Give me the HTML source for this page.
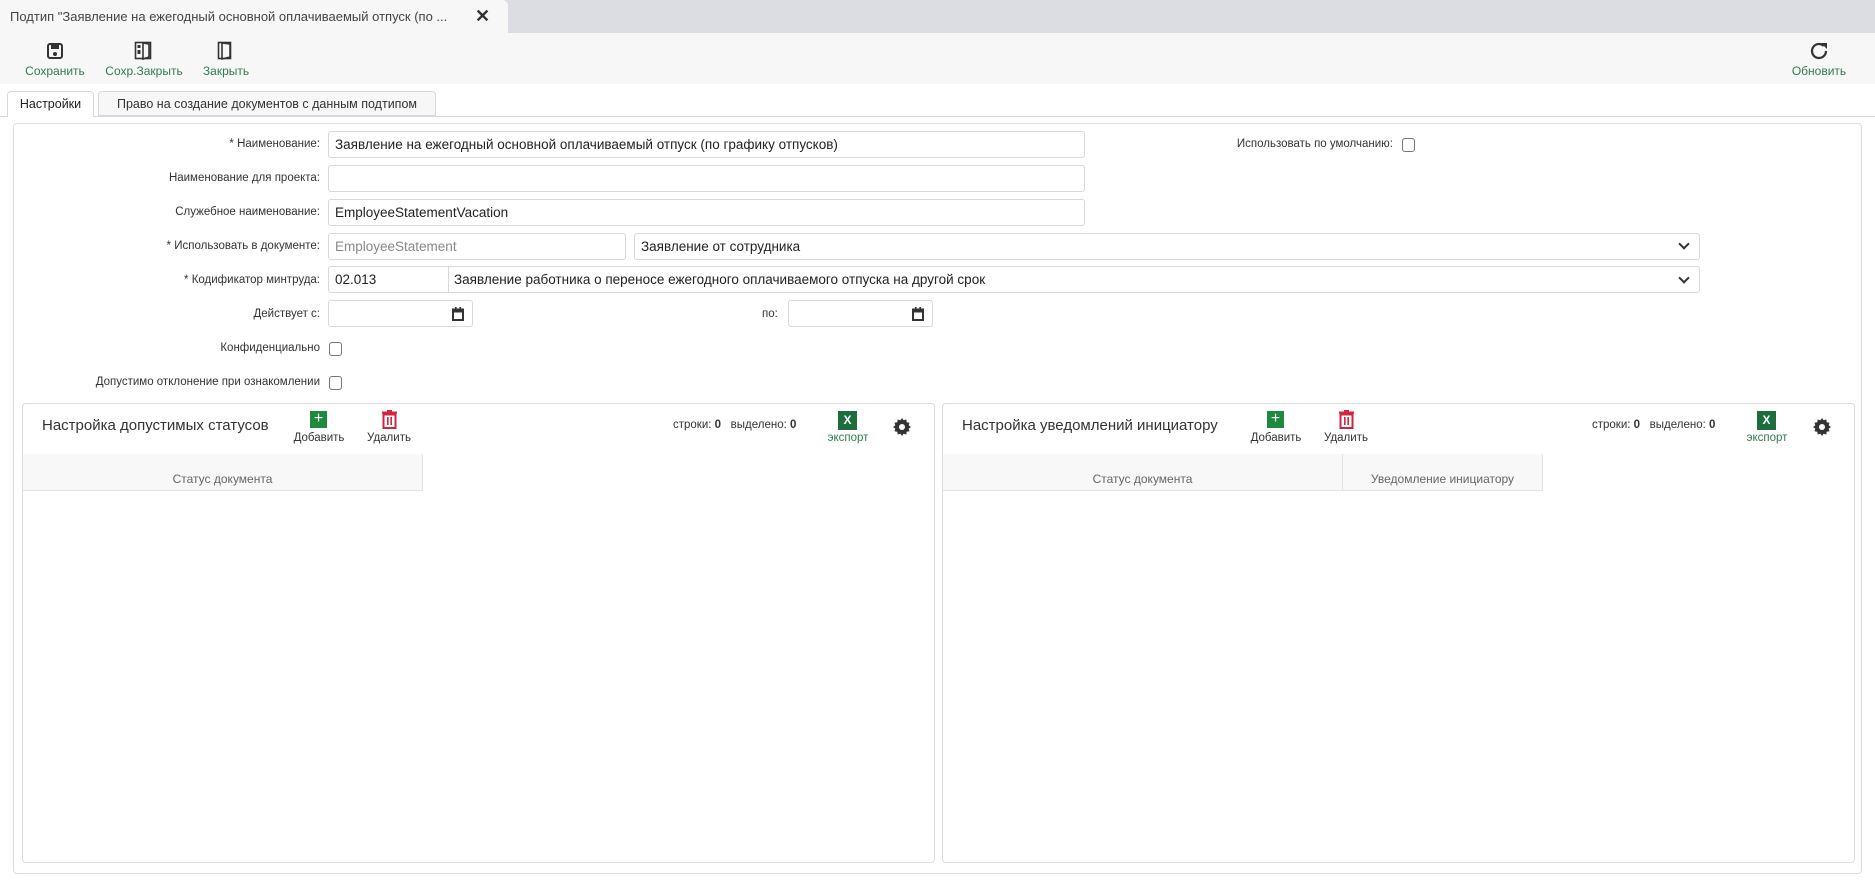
<!DOCTYPE html>
<html><head><meta charset="utf-8"><style>
*{box-sizing:border-box;margin:0;padding:0}
body{width:1875px;height:881px;background:#fff;font-family:"Liberation Sans",sans-serif;color:#333;position:relative;overflow:hidden}
.abs{position:absolute}
.tabbar{left:0;top:0;width:1875px;height:33px;background:#dcdde2}
.doctab{left:0;top:0;width:508px;height:33px;background:#f7f7f7;border-radius:0 6px 0 0;font-size:13px;line-height:33px;padding-left:10px;color:#444}
.toolbar{left:0;top:33px;width:1875px;height:51px;background:#f7f7f7}
.tb{font-size:12px;color:#2e7d4f;text-align:center}
.lbl{font-size:11.5px;color:#333;text-align:right;width:320px;left:0}
.inp{border:1px solid #d5d8de;border-radius:3px;height:27px;font-size:13.5px;line-height:25px;padding-left:6px;color:#222;background:#fff}
.cb{width:13px;height:14px;border:1px solid #777;border-radius:3px;background:#fff}
.panel{border:1px solid #dcdde2;border-radius:4px}
.gt{font-size:15px;color:#333}
.small{font-size:11.5px;color:#333;text-align:center}
.hdr{background:#f8f8f8;border-bottom:1px solid #e3e3e3;border-right:1px solid #e3e3e3;font-size:12px;color:#666;text-align:center;line-height:50px}
.arrow{width:8px;height:8px;border-right:2px solid #333;border-bottom:2px solid #333;transform:rotate(45deg)}
</style></head><body>
<div class="abs tabbar"></div>
<div class="abs doctab">Подтип "Заявление на ежегодный основной оплачиваемый отпуск (по ...<span style="position:absolute;left:475px;font-size:18px;font-weight:bold;color:#333">✕</span></div>
<div class="abs toolbar"></div>
<svg class="abs" style="left:46px;top:42px" width="18" height="18" viewBox="0 0 18 18"><rect x="2" y="2" width="14" height="14" rx="2" fill="none" stroke="#333" stroke-width="2"/><rect x="5" y="3" width="8" height="4" fill="#333"/><circle cx="9" cy="12" r="2" fill="#333"/></svg>
<div class="abs tb" style="left:20px;top:64px;width:70px">Сохранить</div>
<svg class="abs" style="left:134px;top:41px" width="18" height="20" viewBox="0 0 18 20"><rect x="1.5" y="1.5" width="15" height="16" fill="none" stroke="#333" stroke-width="1.6"/><path d="M9 2v16l6-2V3z" fill="none" stroke="#333" stroke-width="1.6"/><rect x="3.5" y="4" width="3" height="3" fill="#333"/><rect x="3.5" y="9" width="3" height="4" fill="#333"/></svg>
<div class="abs tb" style="left:102px;top:64px;width:84px">Сохр.Закрыть</div>
<svg class="abs" style="left:217px;top:41px" width="16" height="20" viewBox="0 0 16 20"><rect x="1.5" y="1.5" width="12" height="16" fill="none" stroke="#333" stroke-width="1.6"/><path d="M5 2v16l8-2V3z" fill="none" stroke="#333" stroke-width="1.6"/></svg>
<div class="abs tb" style="left:196px;top:64px;width:60px">Закрыть</div>
<svg class="abs" style="left:1808px;top:40px" width="22" height="22" viewBox="0 0 22 22"><path d="M18 11a7 7 0 1 1-2.2-5.1" fill="none" stroke="#333" stroke-width="2.2"/><path d="M13 3h6v6z" fill="#333"/></svg>
<div class="abs tb" style="left:1784px;top:64px;width:70px">Обновить</div>
<div class="abs" style="left:0;top:116px;width:1875px;height:1px;background:#d5d8de"></div>
<div class="abs" style="left:7px;top:91px;width:87px;height:26px;border:1px solid #d5d8de;border-bottom:none;border-radius:4px 4px 0 0;background:#fff;font-size:12.5px;line-height:25px;text-align:center;color:#222">Настройки</div>
<div class="abs" style="left:98px;top:91px;width:338px;height:25px;border:1px solid #d5d8de;border-radius:4px 4px 0 0;background:#f7f7f7;font-size:12.5px;line-height:24px;text-align:center;color:#333">Право на создание документов с данным подтипом</div>
<div class="abs panel" style="left:13px;top:123px;width:1849px;height:751px"></div>
<div class="abs lbl" style="top:138px">* Наименование:</div>
<div class="abs inp" style="left:328px;top:131px;width:757px">Заявление на ежегодный основной оплачиваемый отпуск (по графику отпусков)</div>
<div class="abs lbl" style="left:1073px;top:138px">Использовать по умолчанию:</div>
<div class="abs cb" style="left:1402px;top:138px"></div>
<div class="abs lbl" style="top:172px">Наименование для проекта:</div>
<div class="abs inp" style="left:328px;top:165px;width:757px"></div>
<div class="abs lbl" style="top:206px">Служебное наименование:</div>
<div class="abs inp" style="left:328px;top:199px;width:757px">EmployeeStatementVacation</div>
<div class="abs lbl" style="top:240px">* Использовать в документе:</div>
<div class="abs inp" style="left:328px;top:233px;width:298px;color:#888">EmployeeStatement</div>
<div class="abs inp" style="left:634px;top:233px;width:1066px">Заявление от сотрудника</div>
<div class="abs arrow" style="left:1680px;top:240px"></div>
<div class="abs lbl" style="top:274px">* Кодификатор минтруда:</div>
<div class="abs inp" style="left:328px;top:266px;width:1372px">02.013</div>
<div class="abs" style="left:448px;top:267px;width:1px;height:26px;background:#d5d8de"></div>
<div class="abs" style="left:454px;top:266px;font-size:13.5px;line-height:27px;color:#222">Заявление работника о переносе ежегодного оплачиваемого отпуска на другой срок</div>
<div class="abs arrow" style="left:1680px;top:274px"></div>
<div class="abs lbl" style="top:308px">Действует с:</div>
<div class="abs inp" style="left:328px;top:300px;width:145px"></div>
<svg class="abs" style="left:452px;top:307px" width="12" height="14" viewBox="0 0 12 14"><rect x="1" y="2.5" width="10" height="10.5" fill="none" stroke="#333" stroke-width="2"/><rect x="1" y="2.5" width="10" height="3" fill="#333"/><rect x="3" y="0" width="1.6" height="3" fill="#333"/><rect x="7.4" y="0" width="1.6" height="3" fill="#333"/></svg>
<div class="abs" style="left:762px;top:308px;font-size:11.5px">по:</div>
<div class="abs inp" style="left:788px;top:300px;width:145px"></div>
<svg class="abs" style="left:912px;top:307px" width="12" height="14" viewBox="0 0 12 14"><rect x="1" y="2.5" width="10" height="10.5" fill="none" stroke="#333" stroke-width="2"/><rect x="1" y="2.5" width="10" height="3" fill="#333"/><rect x="3" y="0" width="1.6" height="3" fill="#333"/><rect x="7.4" y="0" width="1.6" height="3" fill="#333"/></svg>
<div class="abs lbl" style="top:342px">Конфиденциально</div>
<div class="abs cb" style="left:329px;top:342px"></div>
<div class="abs lbl" style="top:376px">Допустимо отклонение при ознакомлении</div>
<div class="abs cb" style="left:329px;top:376px"></div>
<div class="abs panel" style="left:22px;top:403px;width:913px;height:460px"></div>
<div class="abs gt" style="left:42px;top:417px">Настройка допустимых статусов</div>
<div class="abs" style="left:310px;top:411px;width:17px;height:17px;background:#1e8a3e;color:#fff;font-size:16px;line-height:16px;text-align:center">+</div>
<div class="abs small" style="left:290px;top:432px;width:58px">Добавить</div>
<svg class="abs" style="left:381px;top:410px" width="17" height="19" viewBox="0 0 17 19"><rect x="1" y="1.5" width="15" height="2" fill="#d0253f"/><rect x="6" y="0" width="5" height="2" fill="#d0253f"/><rect x="2.5" y="4.5" width="12" height="13.5" fill="none" stroke="#d0253f" stroke-width="2"/><rect x="6" y="7" width="1.6" height="8" fill="#d0253f"/><rect x="9.4" y="7" width="1.6" height="8" fill="#d0253f"/></svg>
<div class="abs small" style="left:364px;top:432px;width:50px">Удалить</div>
<div class="abs" style="left:673px;top:419px;font-size:11.5px">строки: <b>0</b> &nbsp; выделено: <b>0</b></div>
<div class="abs" style="left:838px;top:411px;width:19px;height:19px;background:#1d6e3c;color:#fff;font-size:12px;line-height:19px;text-align:center;font-weight:bold">X</div>
<div class="abs tb" style="left:822px;top:432px;width:52px;font-size:11.5px">экспорт</div>
<svg class="abs" style="left:892px;top:417px" width="20" height="20" viewBox="0 0 20 20"><path d="M10 1l1.6 2.3 2.7-.8.4 2.8 2.8.4-.8 2.7L19 10l-2.3 1.6.8 2.7-2.8.4-.4 2.8-2.7-.8L10 19l-1.6-2.3-2.7.8-.4-2.8-2.8-.4.8-2.7L1 10l2.3-1.6-.8-2.7 2.8-.4.4-2.8 2.7.8z" fill="#333"/><circle cx="10" cy="10" r="3" fill="#fff"/></svg>
<div class="abs hdr" style="left:23px;top:454px;width:400px;height:37px">Статус документа</div>
<div class="abs panel" style="left:942px;top:403px;width:913px;height:460px"></div>
<div class="abs gt" style="left:962px;top:417px">Настройка уведомлений инициатору</div>
<div class="abs" style="left:1267px;top:411px;width:17px;height:17px;background:#1e8a3e;color:#fff;font-size:16px;line-height:16px;text-align:center">+</div>
<div class="abs small" style="left:1247px;top:432px;width:58px">Добавить</div>
<svg class="abs" style="left:1338px;top:410px" width="17" height="19" viewBox="0 0 17 19"><rect x="1" y="1.5" width="15" height="2" fill="#d0253f"/><rect x="6" y="0" width="5" height="2" fill="#d0253f"/><rect x="2.5" y="4.5" width="12" height="13.5" fill="none" stroke="#d0253f" stroke-width="2"/><rect x="6" y="7" width="1.6" height="8" fill="#d0253f"/><rect x="9.4" y="7" width="1.6" height="8" fill="#d0253f"/></svg>
<div class="abs small" style="left:1321px;top:432px;width:50px">Удалить</div>
<div class="abs" style="left:1592px;top:419px;font-size:11.5px">строки: <b>0</b> &nbsp; выделено: <b>0</b></div>
<div class="abs" style="left:1757px;top:411px;width:19px;height:19px;background:#1d6e3c;color:#fff;font-size:12px;line-height:19px;text-align:center;font-weight:bold">X</div>
<div class="abs tb" style="left:1741px;top:432px;width:52px;font-size:11.5px">экспорт</div>
<svg class="abs" style="left:1812px;top:417px" width="20" height="20" viewBox="0 0 20 20"><path d="M10 1l1.6 2.3 2.7-.8.4 2.8 2.8.4-.8 2.7L19 10l-2.3 1.6.8 2.7-2.8.4-.4 2.8-2.7-.8L10 19l-1.6-2.3-2.7.8-.4-2.8-2.8-.4.8-2.7L1 10l2.3-1.6-.8-2.7 2.8-.4.4-2.8 2.7.8z" fill="#333"/><circle cx="10" cy="10" r="3" fill="#fff"/></svg>
<div class="abs hdr" style="left:943px;top:454px;width:400px;height:37px">Статус документа</div>
<div class="abs hdr" style="left:1343px;top:454px;width:200px;height:37px">Уведомление инициатору</div>
</body></html>
